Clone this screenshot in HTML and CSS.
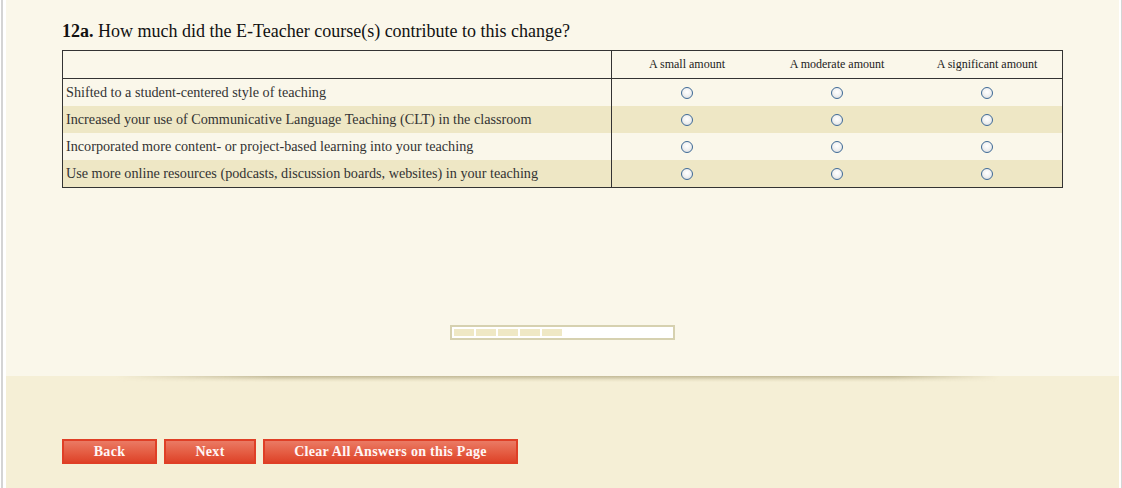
FILE: index.html
```html
<!DOCTYPE html>
<html>
<head>
<meta charset="utf-8">
<link rel="stylesheet" href="styles.css">
</head>
<body>
<div class="frame">
  <div class="page">
    <main class="survey">
      <h1 class="question"><b>12a.</b> How much did the E-Teacher course(s) contribute to this change?</h1>
      <table class="grid">
        <thead>
          <tr>
            <th class="label-col"></th>
            <th>A small amount</th>
            <th>A moderate amount</th>
            <th>A significant amount</th>
          </tr>
        </thead>
        <tbody>
          <tr>
            <td class="label-col">Shifted to a student-centered style of teaching</td>
            <td><input type="radio" name="r1" class="radio"></td>
            <td><input type="radio" name="r1" class="radio"></td>
            <td><input type="radio" name="r1" class="radio"></td>
          </tr>
          <tr class="alt">
            <td class="label-col">Increased your use of Communicative Language Teaching (CLT) in the classroom</td>
            <td><input type="radio" name="r2" class="radio"></td>
            <td><input type="radio" name="r2" class="radio"></td>
            <td><input type="radio" name="r2" class="radio"></td>
          </tr>
          <tr>
            <td class="label-col">Incorporated more content- or project-based learning into your teaching</td>
            <td><input type="radio" name="r3" class="radio"></td>
            <td><input type="radio" name="r3" class="radio"></td>
            <td><input type="radio" name="r3" class="radio"></td>
          </tr>
          <tr class="alt">
            <td class="label-col">Use more online resources (podcasts, discussion boards, websites) in your teaching</td>
            <td><input type="radio" name="r4" class="radio"></td>
            <td><input type="radio" name="r4" class="radio"></td>
            <td><input type="radio" name="r4" class="radio"></td>
          </tr>
        </tbody>
      </table>
      <div class="progress">
        <span class="seg"></span><span class="seg"></span><span class="seg"></span><span class="seg"></span><span class="seg"></span>
      </div>
    </main>
    <footer class="nav">
      <div class="shadow"></div>
      <div class="buttons">
        <button class="btn btn-back">Back</button>
        <button class="btn btn-next">Next</button>
        <button class="btn btn-clear">Clear All Answers on this Page</button>
      </div>
    </footer>
  </div>
</div>
</body>
</html>
```

FILE: styles.css
```css
html, body {
  margin: 0;
  padding: 0;
  background: #ffffff;
}

.frame {
  box-sizing: border-box;
  margin-left: 1px;
  width: 1121px;
  height: 488px;
  border-left: 2px solid #d4d4d4;
  border-right: 1px solid #d4d4d4;
  padding: 0 2px 0 3px;
  background: #ffffff;
  overflow: hidden;
}

.page {
  height: 488px;
  display: flex;
  flex-direction: column;
  font-family: "Liberation Serif", "Times New Roman", serif;
}

.survey {
  height: 376px;
  box-sizing: border-box;
  background: #faf7ea;
  padding: 20px 0 0 56px;
  display: flex;
  flex-direction: column;
}

.question {
  margin: 0;
  font-size: 18px;
  font-weight: normal;
  color: #111;
  line-height: 22px;
  height: 30px;
}

.question b {
  font-weight: bold;
}

.grid {
  width: 1001px;
  border-collapse: collapse;
  border: 1px solid #333333;
  table-layout: fixed;
  font-size: 14.2px;
  color: #333333;
}

.grid th {
  height: 27px;
  padding: 0;
  font-weight: normal;
  font-size: 12px;
  color: #222;
  text-align: center;
  vertical-align: middle;
  border-bottom: 1px solid #333333;
  width: 150px;
}

.grid th.label-col,
.grid td.label-col {
  width: 545px;
  border-right: 1px solid #333333;
  text-align: left;
  padding: 0 0 0 3px;
}

.grid td {
  height: 27px;
  padding: 0;
  text-align: center;
  vertical-align: middle;
  white-space: nowrap;
}

.grid tr.alt td {
  background: #eee7c5;
}

.radio {
  -webkit-appearance: none;
  appearance: none;
  display: block;
  width: 12px;
  height: 12px;
  margin: 0 auto;
  border: 1px solid #3f6a96;
  border-radius: 50%;
  background: radial-gradient(circle at 50% 40%, #ffffff 0%, #f2f2f2 45%, #d2d6da 100%);
}

.progress {
  align-self: center;
  margin: 137px 0 0 -56px;
  width: 217px;
  height: 7px;
  border: 2px solid #d6d1b0;
  background: #ffffff;
  padding: 2px;
  box-sizing: content-box;
  display: flex;
  gap: 2px;
}

.progress .seg {
  width: 20px;
  height: 7px;
  background: #efe8c5;
}

.nav {
  flex: 1;
  background: #f5efd6;
  display: flex;
  flex-direction: column;
}

.shadow {
  height: 6px;
  margin: 0 120px 0 110px;
  background: linear-gradient(to bottom, rgba(160, 150, 110, 0.6), rgba(190, 180, 140, 0.2) 65%, rgba(245, 239, 214, 0));
  -webkit-mask-image: linear-gradient(to right, transparent 0%, #000 18%, #000 88%, transparent 100%);
  mask-image: linear-gradient(to right, transparent 0%, #000 18%, #000 88%, transparent 100%);
}

.buttons {
  display: flex;
  gap: 7px;
  padding: 57px 0 0 56px;
}

.btn {
  height: 25px;
  box-sizing: border-box;
  border: 2px solid #df3f26;
  background: linear-gradient(to bottom, #ea7a64 0%, #e55f45 50%, #de4329 100%);
  color: #fff6f6;
  font-family: "Liberation Serif", "Times New Roman", serif;
  font-weight: bold;
  font-size: 14px;
  letter-spacing: 0.3px;
  padding: 0;
  cursor: pointer;
}

.btn-back { width: 95px; }
.btn-next { width: 92px; }
.btn-clear { width: 255px; }
```
